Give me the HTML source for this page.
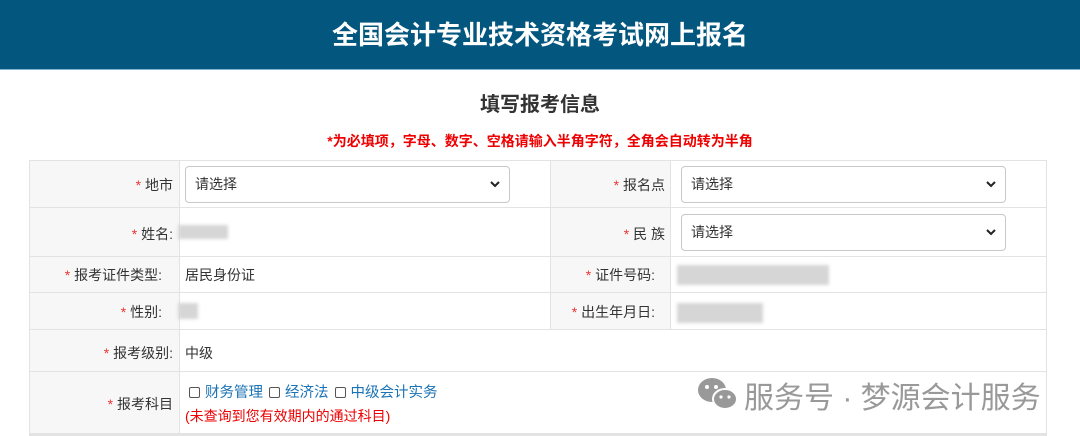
<!DOCTYPE html>
<html><head><meta charset="utf-8"><style>
*{margin:0;padding:0;box-sizing:border-box}
body{width:1080px;height:436px;overflow:hidden;background:#fff;font-family:"Liberation Sans","Noto Sans CJK SC",sans-serif;color:#333;position:relative}
.hd{position:absolute;left:0;top:0;width:1080px;height:70px;background:#03577f;border-bottom:1px solid #7fb6d3;color:#fff;font-size:26px;font-weight:bold;text-align:center;line-height:70px}
.t{position:absolute;top:88px;left:0;width:1080px;text-align:center;font-size:20px;font-weight:bold;color:#333}
.n{position:absolute;top:131px;left:0;width:1080px;text-align:center;font-size:14px;font-weight:bold;color:#e00}
.a{position:absolute;font-size:14px;color:#333;white-space:nowrap}
.r{color:#e33}
.c{position:absolute;background:#f7f7f7}
.l{position:absolute;background:#e3e3e3}
.sel{position:absolute;height:37px;border:1px solid #c8c8c8;border-radius:4px;background:#fff;font-size:14px;line-height:35px;padding-left:9px}
.sel svg{position:absolute;right:9px;top:14px}
.bl{position:absolute;background:#d6d6d6;filter:blur(1.5px)}
.cb{display:inline-block;width:11px;height:11px;border:1px solid #555;border-radius:2px;vertical-align:-1px;margin-right:5px}
.sp{margin-right:6px}
</style></head><body>
<div class="hd">全国会计专业技术资格考试网上报名</div>
<div class="t">填写报考信息</div>
<div class="n">*为必填项，字母、数字、空格请输入半角字符，全角会自动转为半角</div>

<div class="c" style="left:30px;top:160px;width:149px;height:274px"></div>
<div class="c" style="left:550px;top:160px;width:120px;height:169px"></div>
<div class="l" style="left:29px;top:160px;width:1px;height:276px"></div>
<div class="l" style="left:1046px;top:160px;width:1px;height:276px"></div>
<div class="l" style="left:179px;top:160px;width:1px;height:276px"></div>
<div class="l" style="left:550px;top:160px;width:1px;height:169px"></div>
<div class="l" style="left:670px;top:160px;width:1px;height:169px"></div>
<div class="l" style="left:29px;top:160px;width:1018px;height:1px"></div>
<div class="l" style="left:29px;top:207px;width:1018px;height:1px"></div>
<div class="l" style="left:29px;top:256px;width:1018px;height:1px"></div>
<div class="l" style="left:29px;top:292px;width:1018px;height:1px"></div>
<div class="l" style="left:29px;top:329px;width:1018px;height:1px"></div>
<div class="l" style="left:29px;top:371px;width:1018px;height:1px"></div>
<div class="l" style="left:29px;top:433px;width:1018px;height:3px"></div>

<div class="a" style="right:907px;top:175px"><span class="r">* </span>地市</div>
<div class="a" style="right:907px;top:224px"><span class="r">* </span>姓名:</div>
<div class="a" style="right:918px;top:265px"><span class="r">* </span>报考证件类型:</div>
<div class="a" style="right:918px;top:302px"><span class="r">* </span>性别:</div>
<div class="a" style="right:907px;top:343px"><span class="r">* </span>报考级别:</div>
<div class="a" style="right:907px;top:394px"><span class="r">* </span>报考科目</div>

<div class="a" style="right:415px;top:175px"><span class="r">* </span>报名点</div>
<div class="a" style="right:415px;top:224px"><span class="r">* </span>民 族</div>
<div class="a" style="right:425px;top:265px"><span class="r">* </span>证件号码:</div>
<div class="a" style="right:425px;top:302px"><span class="r">* </span>出生年月日:</div>

<div class="sel" style="left:185px;top:166px;width:325px">请选择<svg width="10" height="7" viewBox="0 0 10 7"><path d="M1 1L5 5L9 1" stroke="#222" stroke-width="2" fill="none"/></svg></div>
<div class="sel" style="left:681px;top:166px;width:325px">请选择<svg width="10" height="7" viewBox="0 0 10 7"><path d="M1 1L5 5L9 1" stroke="#222" stroke-width="2" fill="none"/></svg></div>
<div class="sel" style="left:681px;top:214px;width:325px">请选择<svg width="10" height="7" viewBox="0 0 10 7"><path d="M1 1L5 5L9 1" stroke="#222" stroke-width="2" fill="none"/></svg></div>

<div class="bl" style="left:178px;top:225px;width:50px;height:14px"></div>
<div class="bl" style="left:178px;top:303px;width:20px;height:16px"></div>
<div class="bl" style="left:677px;top:265px;width:152px;height:20px"></div>
<div class="bl" style="left:677px;top:303px;width:86px;height:20px"></div>

<div class="a" style="left:185px;top:265px">居民身份证</div>
<div class="a" style="left:185px;top:343px">中级</div>
<div class="a" style="left:189px;top:381px;color:#1a73b5;font-size:14.5px"><span class="cb"></span><span class="sp">财务管理</span><span class="cb"></span><span class="sp">经济法</span><span class="cb"></span>中级会计实务</div>
<div class="a" style="left:185px;top:406px;color:#e00">(未查询到您有效期内的通过科目)</div>

<svg style="position:absolute;left:697px;top:376px" width="42" height="36" viewBox="0 0 42 36"><ellipse cx="15" cy="14" rx="14" ry="12" fill="#999"/><ellipse cx="28" cy="23" rx="12" ry="10" fill="#999" stroke="#fff" stroke-width="2"/><circle cx="10" cy="11" r="2" fill="#fff"/><circle cx="19" cy="11" r="2" fill="#fff"/><circle cx="24" cy="21" r="1.6" fill="#fff"/><circle cx="32" cy="21" r="1.6" fill="#fff"/></svg>
<div class="a" style="left:744px;top:373px;font-size:30px;color:#999">服务号 · 梦源会计服务</div>
</body></html>
